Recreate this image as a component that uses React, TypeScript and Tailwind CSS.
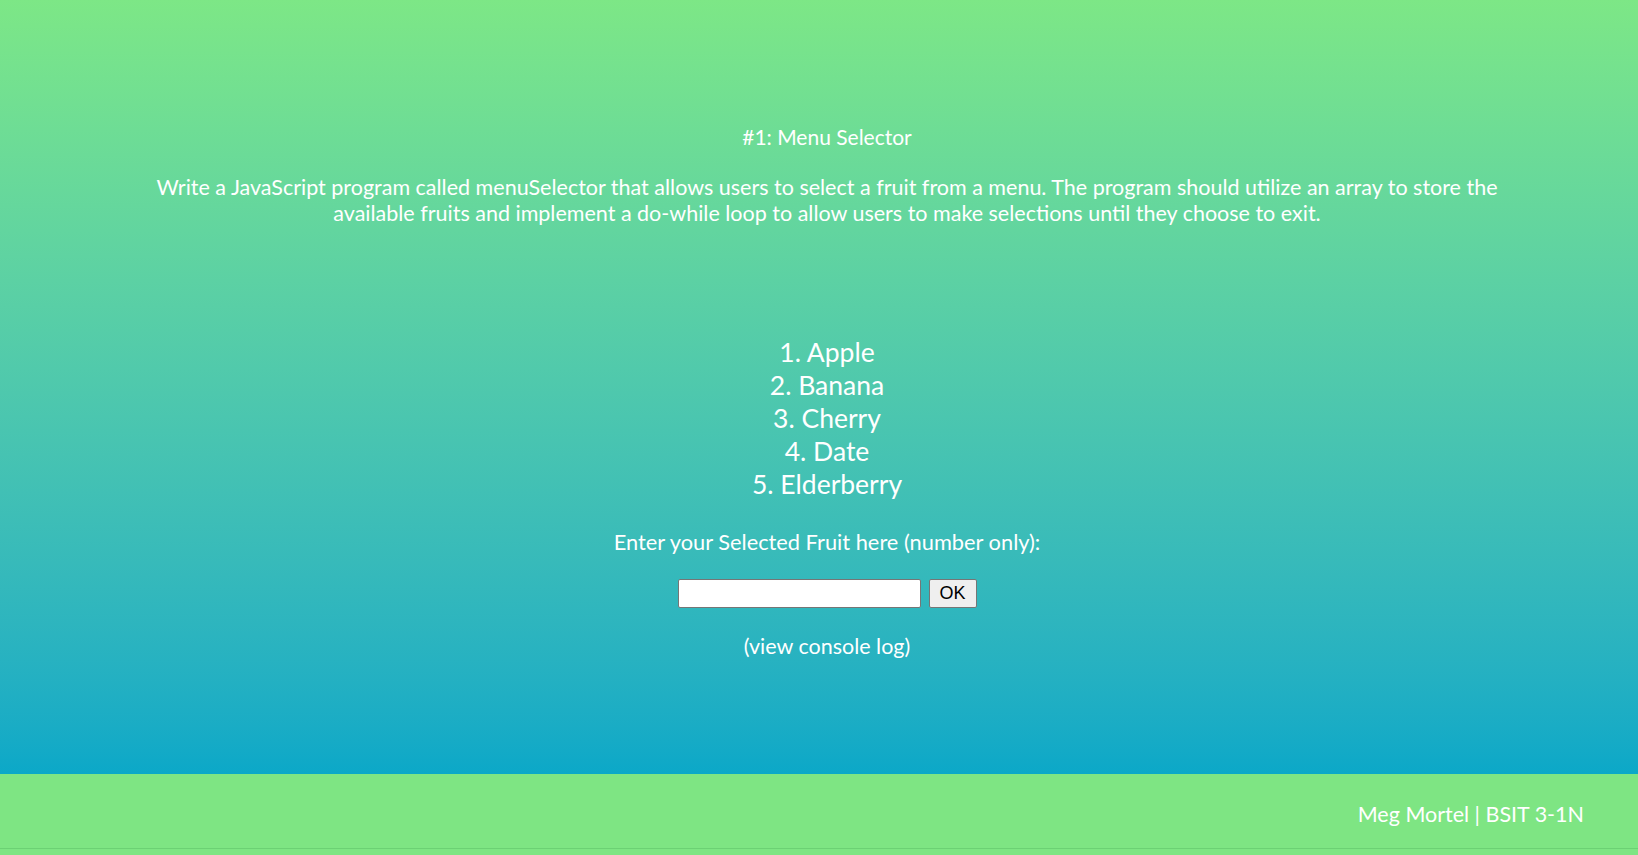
import React from 'react';

const fruits = ['Apple', 'Banana', 'Cherry', 'Date', 'Elderberry'];

const App: React.FC = () => {
  return (
    <div className="min-h-[855px] bg-[#7ee583] font-['Lato',sans-serif] text-white">
      {/* Main content */}
      <main className="h-[774px] bg-gradient-to-b from-[#7de786] to-[#0ba8c8] pl-4">
        <div className="flex flex-col items-center text-center pt-[124px]">
          <h1 className="text-[21px] leading-[26px]">#1: Menu Selector</h1>
          <p className="mt-6 text-[21.5px] leading-[26px] whitespace-nowrap">
            Write a JavaScript program called menuSelector that allows users to select a fruit from a menu. The program should utilize an array to store the
            <br />
            available fruits and implement a do-while loop to allow users to make selections until they choose to exit.
          </p>

          {/* Fruit list */}
          <ul className="mt-[110px] text-[26.5px] leading-[33px]">
            {fruits.map((fruit, i) => (
              <li key={fruit}>
                {i + 1}. {fruit}
              </li>
            ))}
          </ul>

          <p className="mt-7 text-[21.8px] leading-[26px]">Enter your Selected Fruit here (number only):</p>

          <div className="mt-6 flex items-center gap-2">
            <input
              type="text"
              className="w-[243px] h-[29px] bg-white border border-[#767676] rounded-[2px] text-black px-1"
            />
            <button className="w-[48px] h-[29px] bg-[#efefef] border border-[#767676] rounded-[2px] text-black text-[18px] font-['Liberation_Sans',sans-serif]">
              OK
            </button>
          </div>

          <p className="mt-[25px] text-[21.5px] leading-[26px]">(view console log)</p>
        </div>
      </main>

      {/* Footer */}
      <footer className="h-[75px] flex items-center justify-end pr-[54px] pt-[6px] border-b border-[#6cd174]">
        <span className="text-[21.5px]">Meg Mortel | BSIT 3-1N</span>
      </footer>
    </div>
  );
};

export default App;
